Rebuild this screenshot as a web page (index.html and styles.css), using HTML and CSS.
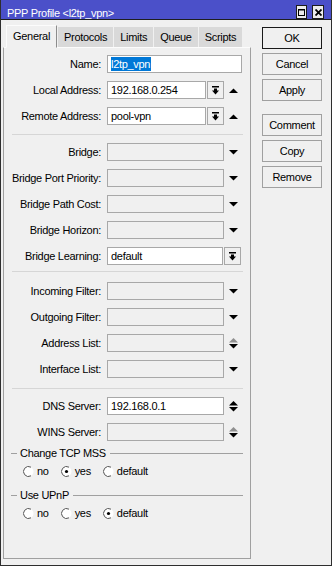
FILE: index.html
```html
<!DOCTYPE html>
<html>
<head>
<meta charset="utf-8">
<link rel="stylesheet" href="styles.css">
</head>
<body>
<div class="window">
  <div class="titlebar">
    <span class="title">PPP Profile &lt;l2tp_vpn&gt;</span>
    <div class="tb-btns">
      <span class="tb-btn max"><svg width="7" height="7" viewBox="0 0 7 7"><rect x="0.5" y="0.5" width="6" height="6" fill="none" stroke="#000" stroke-width="1"/><rect x="0" y="0" width="7" height="1.5" fill="#000"/></svg></span>
      <span class="tb-btn close"><svg width="7" height="7" viewBox="0 0 7 7"><path d="M0.5 0.5 L6.5 6.5 M6.5 0.5 L0.5 6.5" stroke="#000" stroke-width="1.8"/></svg></span>
    </div>
  </div>
  <div class="main">
    <div class="left">
      <div class="tabs">
        <div class="tab active">General</div>
        <div class="tab">Protocols</div>
        <div class="tab">Limits</div>
        <div class="tab">Queue</div>
        <div class="tab">Scripts</div>
      </div>
      <div class="panel">
        <div class="group">
          <div class="row"><span class="lbl">Name:</span><div class="field w-full"><span class="sel">l2tp_vpn</span></div></div>
          <div class="row"><span class="lbl">Local Address:</span><div class="field w-short">192.168.0.254</div><span class="ddbtn"><svg width="7" height="9" viewBox="0 0 7 9"><rect x="0" y="0" width="7" height="1.5"/><rect x="2" y="2.5" width="3" height="2.5"/><polygon points="0,4.5 7,4.5 3.5,8.5"/></svg></span><span class="arr"><svg width="9" height="5" viewBox="0 0 9 5"><polygon points="0,5 9,5 4.5,0.5"/></svg></span></div>
          <div class="row"><span class="lbl">Remote Address:</span><div class="field w-short">pool-vpn</div><span class="ddbtn"><svg width="7" height="9" viewBox="0 0 7 9"><rect x="0" y="0" width="7" height="1.5"/><rect x="2" y="2.5" width="3" height="2.5"/><polygon points="0,4.5 7,4.5 3.5,8.5"/></svg></span><span class="arr"><svg width="9" height="5" viewBox="0 0 9 5"><polygon points="0,5 9,5 4.5,0.5"/></svg></span></div>
        </div>
        <div class="sep s1"></div>
        <div class="group">
          <div class="row"><span class="lbl">Bridge:</span><div class="field dis w-mid"></div><span class="arr"><svg width="9" height="5" viewBox="0 0 9 5"><polygon points="0,0 9,0 4.5,4.5"/></svg></span></div>
          <div class="row"><span class="lbl">Bridge Port Priority:</span><div class="field dis w-mid"></div><span class="arr"><svg width="9" height="5" viewBox="0 0 9 5"><polygon points="0,0 9,0 4.5,4.5"/></svg></span></div>
          <div class="row"><span class="lbl">Bridge Path Cost:</span><div class="field dis w-mid"></div><span class="arr"><svg width="9" height="5" viewBox="0 0 9 5"><polygon points="0,0 9,0 4.5,4.5"/></svg></span></div>
          <div class="row"><span class="lbl">Bridge Horizon:</span><div class="field dis w-mid"></div><span class="arr"><svg width="9" height="5" viewBox="0 0 9 5"><polygon points="0,0 9,0 4.5,4.5"/></svg></span></div>
          <div class="row"><span class="lbl">Bridge Learning:</span><div class="field w-learn">default</div><span class="ddbtn"><svg width="7" height="9" viewBox="0 0 7 9"><rect x="0" y="0" width="7" height="1.5"/><rect x="2" y="2.5" width="3" height="2.5"/><polygon points="0,4.5 7,4.5 3.5,8.5"/></svg></span></div>
        </div>
        <div class="sep s2"></div>
        <div class="group">
          <div class="row"><span class="lbl">Incoming Filter:</span><div class="field dis w-mid"></div><span class="arr"><svg width="9" height="5" viewBox="0 0 9 5"><polygon points="0,0 9,0 4.5,4.5"/></svg></span></div>
          <div class="row"><span class="lbl">Outgoing Filter:</span><div class="field dis w-mid"></div><span class="arr"><svg width="9" height="5" viewBox="0 0 9 5"><polygon points="0,0 9,0 4.5,4.5"/></svg></span></div>
          <div class="row"><span class="lbl">Address List:</span><div class="field dis w-mid"></div><span class="arr"><svg width="9" height="11" viewBox="0 0 9 11"><polygon class="grey" points="0,4.5 9,4.5 4.5,0"/><polygon points="0,6 9,6 4.5,10.5"/></svg></span></div>
          <div class="row"><span class="lbl">Interface List:</span><div class="field dis w-mid"></div><span class="arr"><svg width="9" height="5" viewBox="0 0 9 5"><polygon points="0,0 9,0 4.5,4.5"/></svg></span></div>
        </div>
        <div class="sep s3"></div>
        <div class="group">
          <div class="row"><span class="lbl">DNS Server:</span><div class="field w-mid">192.168.0.1</div><span class="arr"><svg width="9" height="11" viewBox="0 0 9 11"><polygon points="0,4.5 9,4.5 4.5,0"/><polygon points="0,6 9,6 4.5,10.5"/></svg></span></div>
          <div class="row"><span class="lbl">WINS Server:</span><div class="field dis w-mid"></div><span class="arr"><svg width="9" height="11" viewBox="0 0 9 11"><polygon class="grey" points="0,4.5 9,4.5 4.5,0"/><polygon points="0,6 9,6 4.5,10.5"/></svg></span></div>
        </div>
        <div class="legend l1"><span>Change TCP MSS</span></div>
        <div class="radios r1">
          <span class="radio"><svg width="11" height="11" viewBox="0 0 11 11"><circle cx="5.5" cy="5.5" r="5" fill="#fff"/><path d="M8 1.17 A5 5 0 1 0 8 9.83" fill="none" stroke="#555" stroke-width="1"/></svg>no</span>
          <span class="radio"><svg width="11" height="11" viewBox="0 0 11 11"><circle cx="5.5" cy="5.5" r="5" fill="#fff"/><path d="M8 1.17 A5 5 0 1 0 8 9.83" fill="none" stroke="#555" stroke-width="1"/><circle cx="5.5" cy="5.5" r="1.6" fill="#000"/></svg>yes</span>
          <span class="radio"><svg width="11" height="11" viewBox="0 0 11 11"><circle cx="5.5" cy="5.5" r="5" fill="#fff"/><path d="M8 1.17 A5 5 0 1 0 8 9.83" fill="none" stroke="#555" stroke-width="1"/></svg>default</span>
        </div>
        <div class="legend l2"><span>Use UPnP</span></div>
        <div class="radios r2">
          <span class="radio"><svg width="11" height="11" viewBox="0 0 11 11"><circle cx="5.5" cy="5.5" r="5" fill="#fff"/><path d="M8 1.17 A5 5 0 1 0 8 9.83" fill="none" stroke="#555" stroke-width="1"/></svg>no</span>
          <span class="radio"><svg width="11" height="11" viewBox="0 0 11 11"><circle cx="5.5" cy="5.5" r="5" fill="#fff"/><path d="M8 1.17 A5 5 0 1 0 8 9.83" fill="none" stroke="#555" stroke-width="1"/></svg>yes</span>
          <span class="radio"><svg width="11" height="11" viewBox="0 0 11 11"><circle cx="5.5" cy="5.5" r="5" fill="#fff"/><path d="M8 1.17 A5 5 0 1 0 8 9.83" fill="none" stroke="#555" stroke-width="1"/><circle cx="5.5" cy="5.5" r="1.6" fill="#000"/></svg>default</span>
        </div>
      </div>
    </div>
    <div class="buttons">
      <div class="btn default">OK</div>
      <div class="btn">Cancel</div>
      <div class="btn">Apply</div>
      <div class="btn gap">Comment</div>
      <div class="btn">Copy</div>
      <div class="btn">Remove</div>
    </div>
  </div>
</div>
</body>
</html>
```

FILE: styles.css
```css
body {
  margin: 0;
  font-family: "Liberation Sans", Arial, sans-serif;
  font-size: 11px;
  letter-spacing: -0.3px;
  color: #000;
}

.window {
  width: 332px;
  height: 566px;
  box-sizing: border-box;
  border: 1px solid #2e2e2e;
  border-top: none;
  background: #f0f0f0;
  display: flex;
  flex-direction: column;
  overflow: hidden;
}

.titlebar {
  height: 19px;
  margin: 0 -1px;
  background: #4b50c9;
  border-bottom: 1px solid #1e1e1e;
  display: flex;
  align-items: flex-start;
  padding: 0 8px 0 7px;
  color: #fff;
}

.title {
  margin-top: 7px;
  line-height: 12px;
  white-space: nowrap;
}

.tb-btns {
  margin-left: auto;
  margin-top: 5px;
  display: flex;
  gap: 5px;
}

.tb-btn {
  height: 14px;
  box-sizing: border-box;
  border: 1px solid #1c1c1c;
  background: #ececec;
  display: flex;
  align-items: center;
  justify-content: center;
}

.tb-btn.max { width: 11px; }
.tb-btn.close { width: 12px; }

.main {
  display: flex;
  flex: 1;
}

.left {
  margin-left: 2px;
  width: 248px;
  display: flex;
  flex-direction: column;
}

.tabs {
  height: 27px;
  display: flex;
  align-items: flex-end;
  gap: 1px;
  padding-left: 3px;
  position: relative;
  z-index: 1;
}

.tab {
  height: 20px;
  line-height: 21px;
  padding: 0 6px;
  background: #d9d9d9;
  white-space: nowrap;
}

.tab.active {
  height: 23px;
  line-height: 20px;
  box-sizing: border-box;
  padding: 0 6px;
  margin-bottom: -1px;
  background: #f0f0f0;
  border: 1px solid #a0a0a0;
  border-color: #fcfcfc #8c8c8c #f0f0f0 #fcfcfc;
}

.panel {
  height: 512px;
  box-sizing: border-box;
  border: 1px solid #a0a0a0;
  border-top-color: #fcfcfc;
  padding-top: 7px;
}

.group {
  display: flex;
  flex-direction: column;
  gap: 8px;
}

.row {
  display: flex;
  align-items: center;
  height: 18px;
}

.lbl {
  width: 97px;
  margin-right: 6px;
  text-align: right;
  white-space: nowrap;
}

.field {
  box-sizing: border-box;
  height: 18px;
  border: 1px solid #a8a8a8;
  background: #fff;
  padding-left: 3px;
  line-height: 16px;
  white-space: nowrap;
  overflow: hidden;
}

.field.dis { background: #f0f0f0; }

.w-full { width: 135px; }
.w-mid { width: 117px; }
.w-short { width: 99px; }
.w-learn { width: 116px; }

.sel {
  background: #0078d7;
  color: #fff;
  padding: 1px 1px 1px 0;
}

.ddbtn {
  box-sizing: border-box;
  width: 17px;
  height: 18px;
  margin-left: 1px;
  border: 1px solid #a8a8a8;
  background: #f0f0f0;
  display: flex;
  align-items: center;
  justify-content: center;
}

.arr {
  margin-left: 5px;
  display: flex;
  align-items: center;
}

.arr svg { display: block; }
.grey { fill: #8f8f8f; }

.sep {
  height: 1px;
  background: #d6d6d6;
  margin-left: 8px;
  margin-right: 7px;
}

.s1 { margin-top: 9px; margin-bottom: 8px; }
.s2 { margin-top: 6px; margin-bottom: 10px; }
.s3 { margin-top: 10px; margin-bottom: 8px; }

.legend {
  height: 14px;
  display: flex;
  align-items: center;
  margin: 0 7px;
  white-space: nowrap;
}

.legend::before {
  content: "";
  width: 6px;
  height: 1px;
  background: #a0a0a0;
  margin-right: 3px;
}

.legend::after {
  content: "";
  flex: 1;
  height: 1px;
  background: #a0a0a0;
  margin-left: 4px;
}

.l1 { margin-top: 5px; }
.l2 { margin-top: 10px; }

.radios {
  height: 14px;
  display: flex;
  align-items: center;
  gap: 12px;
  padding-left: 19px;
  margin-top: 4px;
}

.radio {
  display: flex;
  align-items: center;
  gap: 3px;
}

.radio svg { display: block; }

.buttons {
  margin-left: 11px;
  width: 60px;
  padding-top: 7px;
  display: flex;
  flex-direction: column;
  gap: 4px;
}

.btn {
  height: 22px;
  box-sizing: border-box;
  border: 1px solid #a0a0a0;
  background: #f0f0f0;
  display: flex;
  align-items: center;
  justify-content: center;
}

.btn.default { border-color: #1a1a1a; }
.btn.gap { margin-top: 9px; }
```
